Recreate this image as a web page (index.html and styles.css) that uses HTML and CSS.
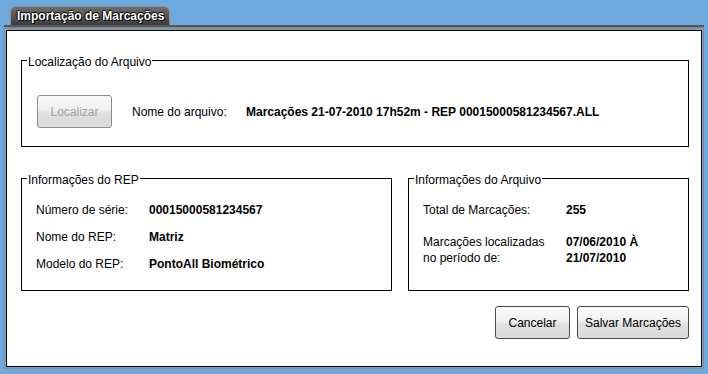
FILE: index.html
```html
<!DOCTYPE html>
<html lang="pt-BR">

<head>
    <meta charset="UTF-8">
    <meta name="viewport" content="width=device-width, initial-scale=1.0">
    <title>Importação de Marcações</title>
    <link rel="stylesheet" href="styles.css">
</head>

<body>

    <div class="window">
        <div class="tab">Importação de Marcações</div>
        <div class="tab-bar"></div>

        <div class="frame">
            <main class="panel">

                <fieldset class="group">
                    <legend>Localização do Arquivo</legend>
                    <div class="group-body file-row">
                        <button class="btn" disabled>Localizar</button>
                        <span class="file-label">Nome do arquivo:</span>
                        <strong>Marcações 21-07-2010 17h52m - REP 00015000581234567.ALL</strong>
                    </div>
                </fieldset>

                <div class="groups">
                    <fieldset class="group rep">
                        <legend>Informações do REP</legend>
                        <div class="group-body info">
                            <span>Número de série:</span>
                            <strong>00015000581234567</strong>
                            <span>Nome do REP:</span>
                            <strong>Matriz</strong>
                            <span>Modelo do REP:</span>
                            <strong>PontoAll Biométrico</strong>
                        </div>
                    </fieldset>

                    <fieldset class="group arquivo">
                        <legend>Informações do Arquivo</legend>
                        <div class="group-body info">
                            <span>Total de Marcações:</span>
                            <strong>255</strong>
                            <span class="two-lines">Marcações localizadas<br>no período de:</span>
                            <strong class="two-lines">07/06/2010 À<br>21/07/2010</strong>
                        </div>
                    </fieldset>
                </div>

                <div class="actions">
                    <button class="btn cancel">Cancelar</button>
                    <button class="btn save">Salvar Marcações</button>
                </div>

            </main>
        </div>
    </div>

</body>

</html>
```

FILE: styles.css
```css
body {
    margin: 0;
    background-color: #6fa8dc;
    font-family: "Liberation Sans", Arial, sans-serif;
    font-size: 12px;
    color: #000;
}

.window {
    width: 700px;
    margin: 6px 0 0 4px;
}

/* aba do titulo */
.tab {
    width: 160px;
    height: 19px;
    margin-left: 6px;
    box-sizing: border-box;
    border: 1px solid #8e8e8e;
    border-bottom: none;
    border-radius: 6px 6px 0 0;
    background: linear-gradient(#6e6e6e, #3c3c3c);
    color: #fff;
    font-weight: bold;
    line-height: 19px;
    padding-left: 6px;
    text-shadow: 1px 1px 0 #000, -1px 0 1px #000, 0 -1px 1px #000;
}

.tab-bar {
    height: 2px;
    background-color: #555;
    border-bottom: 2px solid #8a8a8a;
}

.frame {
    border: 1px solid #8a8a8a;
    border-top: none;
    padding: 1px;
}

.panel {
    display: block;
    border: 1px solid #000;
    background-color: #fff;
    padding: 21px 12px 27px 14px;
}

/* caixas agrupadas */
.group {
    margin: 0;
    padding: 0;
    min-width: 0;
    border: 1px solid #000;
}

.group legend {
    margin-left: 5px;
    padding: 4px 1px 0;
    line-height: 12px;
}

.file-row {
    display: flex;
    align-items: center;
    padding: 27px 15px 18px;
}

.file-label {
    width: 114px;
    margin-left: 20px;
}

.groups {
    display: flex;
    gap: 16px;
    margin-top: 23px;
}

.rep {
    width: 371px;
    box-sizing: border-box;
}

.arquivo {
    width: 281px;
    box-sizing: border-box;
}

.info {
    display: grid;
    line-height: 27px;
    padding: 11px 14px 12px;
}

.rep .info {
    grid-template-columns: 113px auto;
}

.arquivo .info {
    grid-template-columns: 143px auto;
}

.info .two-lines {
    line-height: 16px;
    margin-top: 10px;
}

/* botoes */
.btn {
    height: 33px;
    width: 75px;
    padding: 0;
    font-family: inherit;
    font-size: 12px;
    color: #000;
    border: 1px solid #4a4a4a;
    border-radius: 3px;
    background: linear-gradient(#fafafa 0%, #f0f0f0 45%, #e0e0e0 55%, #dadada 100%);
}

.btn:disabled {
    color: #a3a3a3;
    border-color: #8c8c8c;
}

.actions {
    display: flex;
    justify-content: flex-end;
    gap: 7px;
    margin-top: 15px;
}

.save {
    width: 112px;
}
```
